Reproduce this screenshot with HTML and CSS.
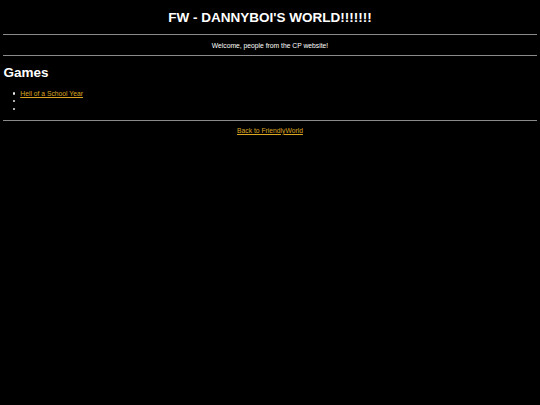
FILE: index.html
```html
<!DOCTYPE html>
<html>
<head>
<meta charset="utf-8">
<title>FW - DANNYBOI'S WORLD</title>
<link rel="stylesheet" href="styles.css">
</head>
<body class="page">
<h1 class="title">FW - DANNYBOI'S WORLD!!!!!!!</h1>
<hr class="rule">
<p class="welcome">Welcome, people from the CP website!</p>
<hr class="rule">
<h1 class="section">Games</h1>
<ul class="games">
<li class="game"><a class="link" href="#">Hell of a School Year</a></li>
<li class="game"></li>
<li class="game"></li>
</ul>
<hr class="rule">
<p class="back"><a class="link" href="#">Back to FriendlyWorld</a></p>
</body>
</html>
```

FILE: styles.css
```css
html { background: #000; }
.page {
  margin: 3.375px;
  background: #000;
  color: #fff;
  font-family: "Liberation Sans", Arial, sans-serif;
  font-size: 6.75px;
}
.title,
.section {
  font-size: 13.5px;
  margin: 9.05px 0;
}
.title {
  text-align: center;
  margin-top: 6.5px;
}
.rule {
  border: none;
  border-top: 1px solid #8a8a8a;
  height: 0;
  margin: 3.375px 0;
}
.welcome {
  text-align: center;
  margin: 6.75px 0;
}
.games {
  list-style: none;
  margin: 6.75px 0 7.5px;
  padding-left: 16.9px;
}
.game {
  display: flex;
  align-items: center;
  height: 7.7px;
  line-height: 7.7px;
}
.game::before {
  content: "";
  flex: none;
  width: 2.4px;
  height: 2.4px;
  border-radius: 50%;
  background: #e6e6e6;
  margin-left: -7.2px;
  margin-right: 4.8px;
}
.link { color: #daa520; }
.back {
  text-align: center;
  margin: 5.75px 0 6.75px;
}
```
